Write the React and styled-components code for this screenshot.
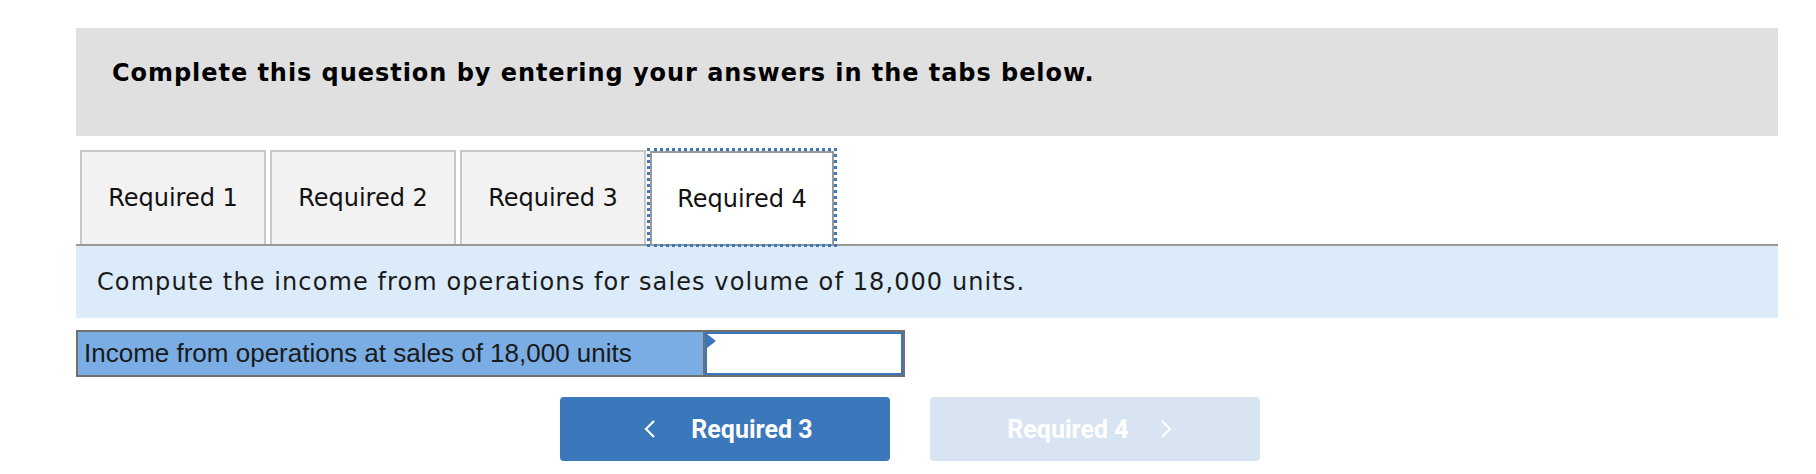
import React from "react";
import styled, { createGlobalStyle, css } from "styled-components";

const Global = createGlobalStyle`
  html, body { margin: 0; padding: 0; background: #ffffff; }
  body { font-family: "DejaVu Sans", Verdana, sans-serif; color: #1a1a1a; }
`;

const Page = styled.div`
  padding: 28px 38px 0 76px;
`;

const Header = styled.div`
  height: 108px;
  box-sizing: border-box;
  background: #e0e0e0;
  padding: 31px 36px 0;
  font-weight: bold;
  font-size: 24px;
  letter-spacing: 0.95px;
  line-height: 28px;
  color: #000;
`;

const TabStrip = styled.div`
  margin-top: 14px;
  display: flex;
  gap: 4px;
  padding-left: 4px;
  border-bottom: 2px solid #999999;
`;

const Tab = styled.div`
  width: 186px;
  height: 94px;
  box-sizing: border-box;
  display: flex;
  align-items: center;
  justify-content: center;
  font-size: 24px;
  color: #111;
  background: #f2f2f2;
  border: 2px solid #c8c8c8;
  border-bottom: none;
  ${(p) =>
    p.$active &&
    css`
      width: 184px;
      margin-top: 1px;
      height: 93px;
      background: #ffffff;
      border: 2px solid #999999;
      border-bottom: none;
      outline: 3px dotted #3a77bb;
      position: relative;
      z-index: 1;
    `}
`;

const Instruction = styled.div`
  height: 72px;
  background: #dbebf9;
  display: flex;
  align-items: center;
  padding-left: 21px;
  font-size: 24px;
  letter-spacing: 1.1px;
  color: #1a1a1a;
`;

const AnswerRow = styled.div`
  margin-top: 12px;
  width: 829px;
  height: 47px;
  box-sizing: border-box;
  border: 2px solid #707070;
  display: flex;
`;

const Label = styled.div`
  width: 627px;
  background: #7aade4;
  border-right: 2px solid #707070;
  display: flex;
  align-items: center;
  padding-left: 6px;
  box-sizing: border-box;
  font-family: "Liberation Sans", Arial, sans-serif;
  font-size: 26px;
  color: #1a1a1a;
`;

const InputCell = styled.div`
  flex: 1;
  position: relative;
  background: #ffffff;
  border: 2px solid #3a76bb;
  &::before {
    content: "";
    position: absolute;
    left: 0;
    top: 0;
    border-top: 7px solid transparent;
    border-bottom: 7px solid transparent;
    border-left: 9px solid #3a76bb;
  }
`;

const NavRow = styled.div`
  margin-top: 20px;
  padding-left: 484px;
  display: flex;
  gap: 40px;
`;

const NavButton = styled.div`
  width: 330px;
  height: 64px;
  box-sizing: border-box;
  border-radius: 4px;
  display: flex;
  align-items: center;
  justify-content: center;
  gap: ${(p) => (p.$disabled ? "31px" : "35px")};
  padding: ${(p) => (p.$disabled ? "0 11px 0 0" : "0 0 0 7px")};
  font-family: Roboto, "Liberation Sans", Arial, sans-serif;
  font-weight: 700;
  font-size: 25px;
  color: #ffffff;
  background: ${(p) => (p.$disabled ? "#d8e4f2" : "#3a77bb")};
`;

const Chevron = ({ dir }) => (
  <svg width="12" height="18" viewBox="0 0 12 18" fill="none">
    <polyline
      points={dir === "left" ? "10,1 2,9 10,17" : "2,1 10,9 2,17"}
      stroke="#ffffff"
      strokeWidth="2.2"
      strokeLinejoin="miter"
    />
  </svg>
);

export default function App() {
  return (
    <>
      <Global />
      <Page>
        <Header>Complete this question by entering your answers in the tabs below.</Header>
        <TabStrip>
          <Tab>Required 1</Tab>
          <Tab>Required 2</Tab>
          <Tab>Required 3</Tab>
          <Tab $active>Required 4</Tab>
        </TabStrip>
        <Instruction>Compute the income from operations for sales volume of 18,000 units.</Instruction>
        <AnswerRow>
          <Label>Income from operations at sales of 18,000 units</Label>
          <InputCell />
        </AnswerRow>
        <NavRow>
          <NavButton>
            <Chevron dir="left" />
            <span>Required 3</span>
          </NavButton>
          <NavButton $disabled>
            <span>Required 4</span>
            <Chevron dir="right" />
          </NavButton>
        </NavRow>
      </Page>
    </>
  );
}
